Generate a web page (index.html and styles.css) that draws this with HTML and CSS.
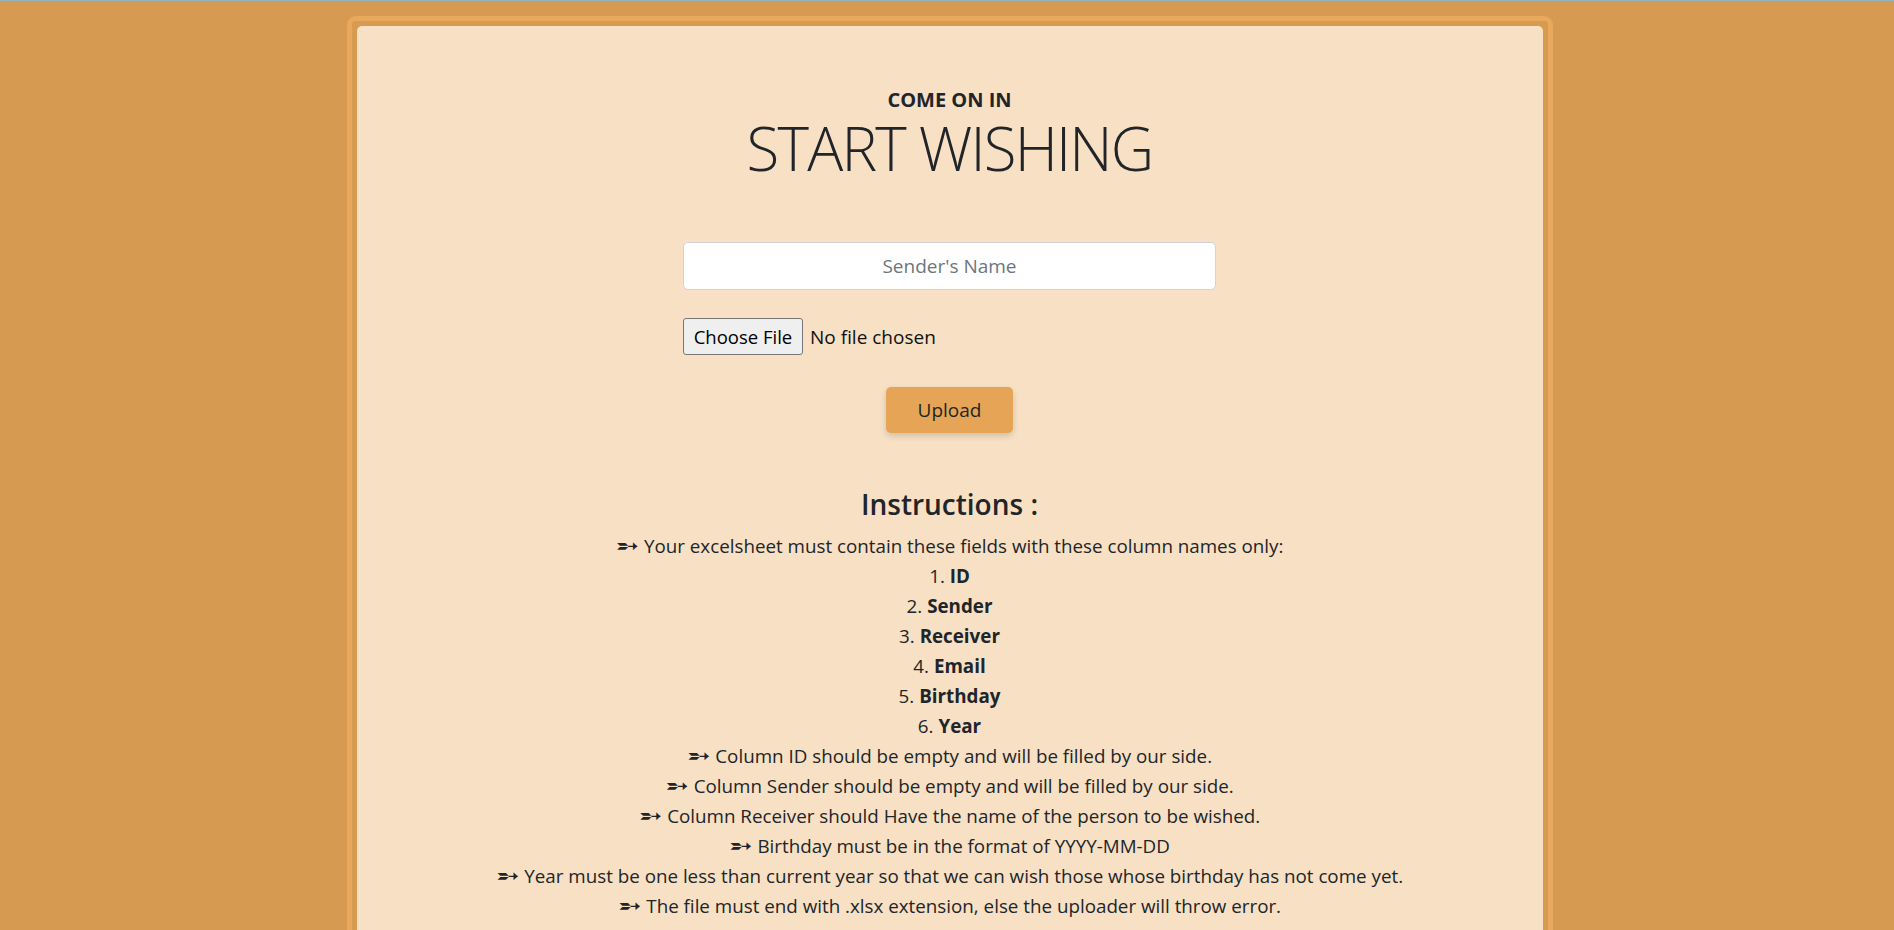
FILE: index.html
```html
<!DOCTYPE html>
<html lang="en">
<head>
<meta charset="utf-8">
<title>Start Wishing</title>
<link rel="stylesheet" href="styles.css">
</head>
<body>
<div class="page">
  <div class="frame">
    <main class="card">
      <h6 class="eyebrow">COME ON IN</h6>
      <h1 class="title">START WISHING</h1>
      <form class="wish-form">
        <input class="name-input" type="text" placeholder="Sender's Name">
        <div class="file-row">
          <label class="file-btn">Choose File<input class="file-native" type="file"></label>
          <span class="file-status">No file chosen</span>
        </div>
        <button class="upload-btn" type="button">Upload</button>
      </form>
      <section class="instructions">
        <h3 class="instr-title">Instructions :</h3>
        <p class="instr-line"><span class="arrow">➵</span> Your excelsheet must contain these fields with these column names only:</p>
        <p class="instr-line">1. <b>ID</b></p>
        <p class="instr-line">2. <b>Sender</b></p>
        <p class="instr-line">3. <b>Receiver</b></p>
        <p class="instr-line">4. <b>Email</b></p>
        <p class="instr-line">5. <b>Birthday</b></p>
        <p class="instr-line">6. <b>Year</b></p>
        <p class="instr-line"><span class="arrow">➵</span> Column ID should be empty and will be filled by our side.</p>
        <p class="instr-line"><span class="arrow">➵</span> Column Sender should be empty and will be filled by our side.</p>
        <p class="instr-line"><span class="arrow">➵</span> Column Receiver should Have the name of the person to be wished.</p>
        <p class="instr-line"><span class="arrow">➵</span> Birthday must be in the format of YYYY-MM-DD</p>
        <p class="instr-line"><span class="arrow">➵</span> Year must be one less than current year so that we can wish those whose birthday has not come yet.</p>
        <p class="instr-line"><span class="arrow">➵</span> The file must end with .xlsx extension, else the uploader will throw error.</p>
      </section>
    </main>
  </div>
</div>
</body>
</html>
```

FILE: styles.css
```css
* { box-sizing: border-box; }

html, body {
  margin: 0;
  padding: 0;
}

body {
  background: #d69a50;
  border-top: 1px solid #8fb5c1;
  font-family: "Open Sans", "Noto Sans", sans-serif;
  color: #212529;
}

.page {
  padding: 15px 0 0 5px;
}

.frame {
  width: 1206px;
  margin: 0 auto;
  border: 5px solid #e8a95d;
  border-radius: 9px;
  padding: 5px;
}

.card {
  background: #f7e0c4;
  border-radius: 5px;
  text-align: center;
  padding: 65px 20px 60px;
}

.eyebrow {
  margin: 0 0 4px;
  font-size: 20px;
  font-weight: 700;
  line-height: 18px;
}

.title {
  margin: 0;
  font-size: 60px;
  font-weight: 300;
  letter-spacing: -1.8px;
  line-height: 70px;
}

.wish-form {
  width: 533px;
  margin: 59px auto 0;
  display: flex;
  flex-direction: column;
  align-items: stretch;
}

.name-input {
  height: 48px;
  width: 100%;
  border: 1px solid #ced4da;
  border-radius: 5px;
  background: #fff;
  font-family: inherit;
  font-size: 19px;
  text-align: center;
  color: #212529;
  padding: 8px 16px;
}

.name-input::placeholder {
  color: #6c757d;
}

.file-row {
  margin-top: 28px;
  display: flex;
  align-items: center;
  gap: 7px;
  font-size: 19px;
}

.file-btn {
  height: 37px;
  width: 120px;
  display: inline-flex;
  align-items: center;
  justify-content: center;
  background: #efefef;
  border: 1px solid #767676;
  border-radius: 3px;
  color: #000;
  font-size: 18.5px;
  cursor: pointer;
}

.file-native {
  display: none;
}

.file-status {
  color: #111;
}

.upload-btn {
  align-self: center;
  margin-top: 32px;
  width: 127px;
  height: 46px;
  border: none;
  border-radius: 5px;
  background: #e6a556;
  color: #212529;
  font-family: inherit;
  font-size: 19px;
  box-shadow: 0 3px 6px rgba(0, 0, 0, 0.15);
}

.instructions {
  margin-top: 53px;
}

.instr-title {
  margin: 0 0 9px;
  font-size: 28px;
  font-weight: 600;
  line-height: 36px;
}

.instr-line {
  margin: 0;
  font-size: 18.8px;
  line-height: 30px;
}

.instr-line b {
  font-weight: 700;
}

.arrow {
  font-family: "DejaVu Sans", sans-serif;
  font-size: 28px;
  line-height: 0;
  vertical-align: -2px;
}
```
